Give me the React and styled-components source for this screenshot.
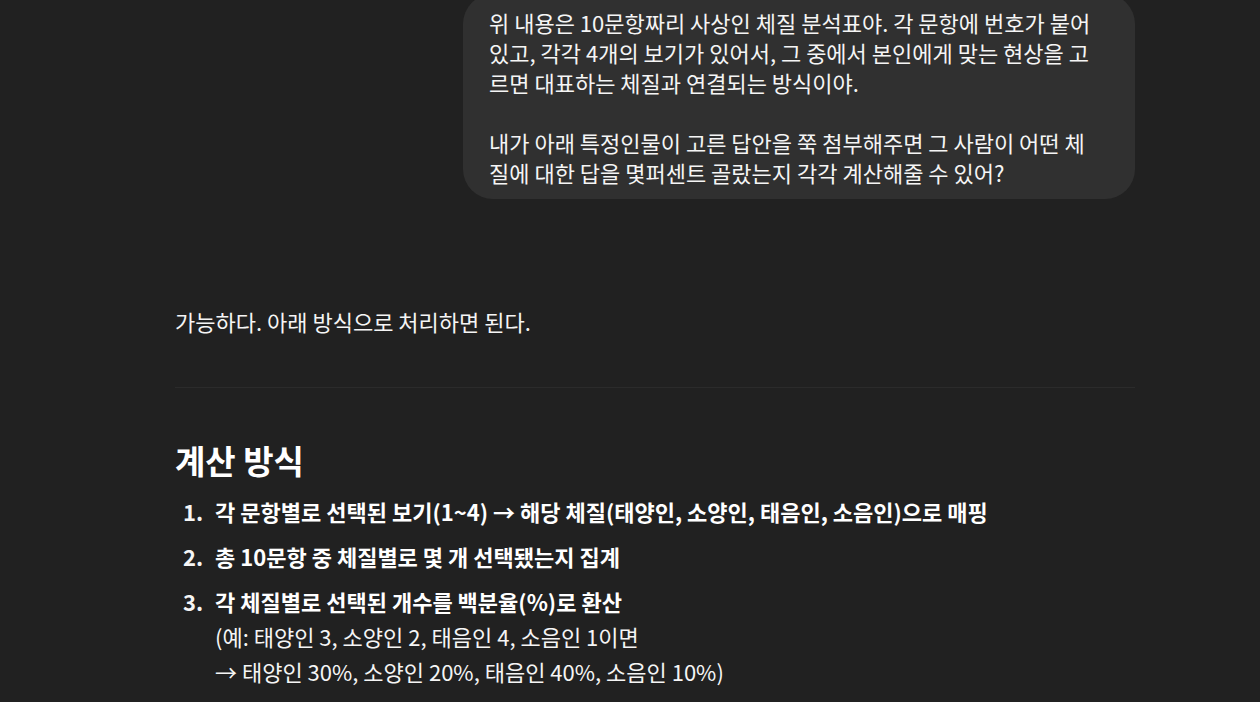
import React from "react";
import styled, { createGlobalStyle } from "styled-components";

const Global = createGlobalStyle`
  html, body { margin: 0; padding: 0; background: #212121; }
  body {
    font-family: "Noto Sans CJK KR", "Noto Sans", "Liberation Sans", sans-serif;
    color: #f5f5f5;
    overflow: hidden;
  }
`;

const Page = styled.div`
  width: 1260px;
  height: 702px;
  background: #212121;
  overflow: hidden;
  box-sizing: border-box;
  padding-left: 175px;
`;

const Column = styled.div`
  width: 960px;
  display: flex;
  flex-direction: column;
`;

const UserRow = styled.div`
  display: flex;
  justify-content: flex-end;
  margin-top: -6px;
`;

const Bubble = styled.div`
  width: 672px;
  box-sizing: border-box;
  background: #303030;
  border-radius: 30px;
  padding: 13px 32px 12px 26px;
  font-size: 22px;
  line-height: 30px;
  color: #f5f5f5;
  word-break: break-all;
`;

const BubbleP = styled.p`
  margin: 0;
  & + & { margin-top: 30px; }
`;

const Answer = styled.div`
  margin-top: 105px;
  font-size: 22px;
  line-height: 35px;
  color: #f5f5f5;
`;

const Para = styled.p`
  margin: 0;
`;

const Rule = styled.hr`
  border: none;
  height: 1px;
  background: #2b2b2b;
  margin: 48px 0 52px;
`;

const Heading = styled.h3`
  margin: 0;
  font-size: 33px;
  line-height: 40px;
  font-weight: 700;
  color: #ffffff;
`;

const List = styled.ol`
  margin: 14px 0 0;
  padding-left: 40px;
  list-style: none;
  counter-reset: item;
`;

const Item = styled.li`
  position: relative;
  counter-increment: item;
  margin-bottom: 10px;
  &::before {
    content: counter(item) ".";
    position: absolute;
    left: -32px;
    font-weight: 700;
  }
`;

const Strong = styled.strong`
  font-weight: 700;
  color: #ffffff;
`;

export default function App() {
  return (
    <>
      <Global />
      <Page>
        <Column>
          <UserRow>
            <Bubble>
              <BubbleP>
                위 내용은 10문항짜리 사상인 체질 분석표야. 각 문항에 번호가 붙어 있고, 각각 4개의 보기가 있어서, 그 중에서 본인에게 맞는 현상을 고르면 대표하는 체질과 연결되는 방식이야.
              </BubbleP>
              <BubbleP>
                내가 아래 특정인물이 고른 답안을 쭉 첨부해주면 그 사람이 어떤 체질에 대한 답을 몇퍼센트 골랐는지 각각 계산해줄 수 있어?
              </BubbleP>
            </Bubble>
          </UserRow>
          <Answer>
            <Para>가능하다. 아래 방식으로 처리하면 된다.</Para>
            <Rule />
            <Heading>계산 방식</Heading>
            <List>
              <Item>
                <Strong>각 문항별로 선택된 보기(1~4) → 해당 체질(태양인, 소양인, 태음인, 소음인)으로 매핑</Strong>
              </Item>
              <Item>
                <Strong>총 10문항 중 체질별로 몇 개 선택됐는지 집계</Strong>
              </Item>
              <Item>
                <Strong>각 체질별로 선택된 개수를 백분율(%)로 환산</Strong>
                <br />
                (예: 태양인 3, 소양인 2, 태음인 4, 소음인 1이면
                <br />→ 태양인 30%, 소양인 20%, 태음인 40%, 소음인 10%)
              </Item>
            </List>
          </Answer>
        </Column>
      </Page>
    </>
  );
}
